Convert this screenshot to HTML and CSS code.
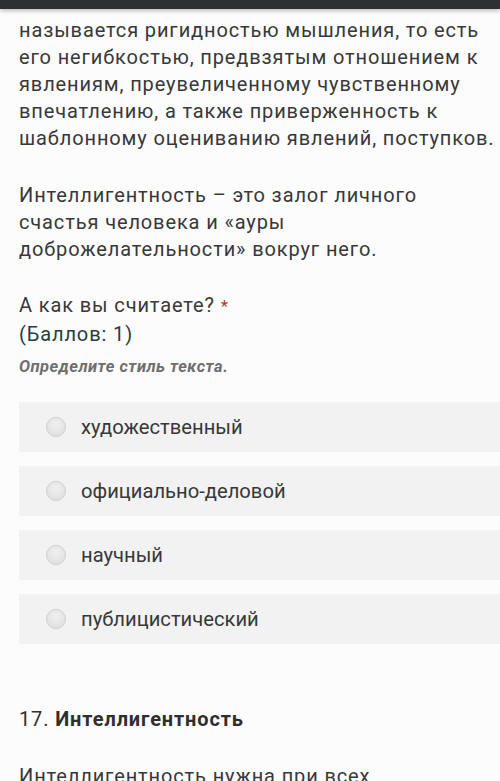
FILE: index.html
```html
<!DOCTYPE html>
<html lang="ru">
<head>
<meta charset="utf-8">
<link rel="stylesheet" href="styles.css">
</head>
<body>
<div class="topbar"></div>
<main class="content">
  <p class="para first">называется ригидностью мышления, то есть его негибкостью, предвзятым отношением к явлениям, преувеличенному чувственному впечатлению, а также приверженность к шаблонному оцениванию явлений, поступков.</p>
  <p class="para second">Интеллигентность – это залог личного счастья человека и «ауры доброжелательности» вокруг него.</p>
  <div class="question">
    <div class="qtitle">А как вы считаете? <span class="req">*</span></div>
    <div class="points">(Баллов: 1)</div>
  </div>
  <div class="hint">Определите стиль текста.</div>
  <div class="options">
    <label class="option"><span class="radio"></span><span class="otext">художественный</span></label>
    <label class="option"><span class="radio"></span><span class="otext">официально-деловой</span></label>
    <label class="option"><span class="radio"></span><span class="otext">научный</span></label>
    <label class="option"><span class="radio"></span><span class="otext">публицистический</span></label>
  </div>
  <div class="next-title"><span class="num">17.</span> <b>Интеллигентность</b></div>
  <p class="para next">Интеллигентность нужна при всех</p>
</main>
</body>
</html>
```
FILE: styles.css
```css
html, body {
  margin: 0;
  padding: 0;
}
body {
  background: #fcfcfc;
  font-family: Roboto, "Liberation Sans", Arial, sans-serif;
  color: #383838;
  width: 500px;
  height: 781px;
  overflow: hidden;
}
.topbar {
  height: 9px;
  background: #2e2f31;
  box-shadow: 0 2px 4px rgba(0,0,0,0.25);
  position: relative;
  z-index: 2;
}
.content {
  padding: 7.5px 0 0 19px;
}
.para {
  margin: 0;
  font-size: 20px;
  line-height: 27px;
  letter-spacing: 0.88px;
}
.second {
  margin-top: 30px;
}
.question {
  margin-top: 29px;
  font-size: 20px;
  line-height: 27px;
  letter-spacing: 0.88px;
}
.req {
  color: #b83a28;
  font-size: 17px;
}
.points {
  color: #24403e;
  margin-top: 1px;
}
.hint {
  margin-top: 9px;
  font-size: 16.5px;
  line-height: 20px;
  font-weight: bold;
  font-style: italic;
  letter-spacing: 0.5px;
  color: #6e6e6e;
}
.options {
  margin-top: 25px;
  display: flex;
  flex-direction: column;
  gap: 14px;
}
.option {
  height: 50px;
  background: #f2f2f2;
  display: flex;
  align-items: center;
  font-size: 20.2px;
}
.radio {
  width: 18px;
  height: 18px;
  border-radius: 50%;
  border: 1px solid #cfcfcf;
  background: radial-gradient(circle at 50% 35%, #f1f1f1, #dcdcdc);
  margin-left: 27px;
  margin-right: 15px;
  flex: none;
}
.next-title {
  margin-top: 62px;
  font-size: 20px;
  line-height: 27px;
  letter-spacing: 0.88px;
  color: #2f2f2f;
}
.next-title b {
  font-weight: bold;
}
.next {
  margin-top: 30px;
}
```
